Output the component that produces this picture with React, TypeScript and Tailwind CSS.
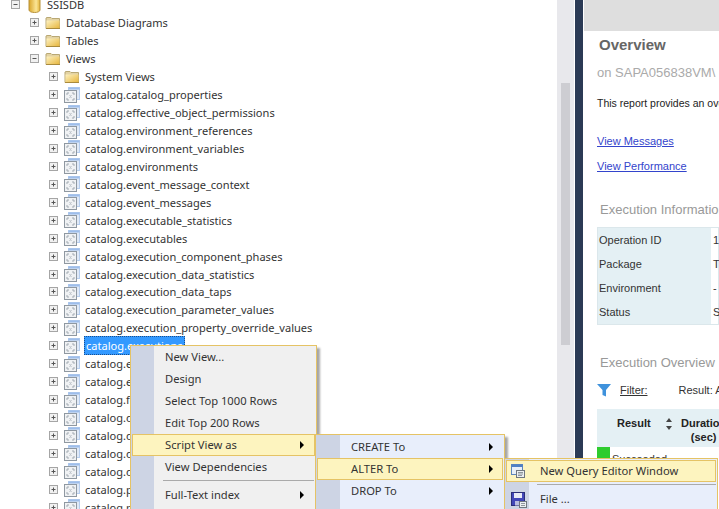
const views = [
  "catalog.catalog_properties",
  "catalog.effective_object_permissions",
  "catalog.environment_references",
  "catalog.environment_variables",
  "catalog.environments",
  "catalog.event_message_context",
  "catalog.event_messages",
  "catalog.executable_statistics",
  "catalog.executables",
  "catalog.execution_component_phases",
  "catalog.execution_data_statistics",
  "catalog.execution_data_taps",
  "catalog.execution_parameter_values",
  "catalog.execution_property_override_values",
  "catalog.executions",
  "catalog.extended_operation_info",
  "catalog.event_messages",
  "catalog.folders",
  "catalog.object_parameters",
  "catalog.object_versions",
  "catalog.operation_messages",
  "catalog.operations",
  "catalog.packages",
  "catalog.projects",
];

function Expander({ open }: { open?: boolean }) {
  return (
    <svg width="11" height="11" viewBox="0 0 11 11" className="shrink-0">
      <rect x="1.500" y="1.500" width="8" height="8" fill="#f1f1f1" stroke="#a5a5a5" />
      <path d="M3.500 5.500h4" stroke="#555" />
      {!open && <path d="M5.500 3.500v4" stroke="#555" />}
    </svg>
  );
}

function FolderIcon() {
  return (
    <svg width="16" height="14" viewBox="0 0 16 14" className="shrink-0">
      <defs>
        <linearGradient id="folderFill" x1="0" y1="0" x2="1" y2="1">
          <stop offset="0" stopColor="#fdf1c0" />
          <stop offset="1" stopColor="#e6b53c" />
        </linearGradient>
      </defs>
      <path d="M1 3V2L2 1.500h4l1 1h7.500V12.500H1z" fill="#e3d3a4" stroke="#b9a874" />
      <path d="M1.500 4.500h13v8h-13z" fill="url(#folderFill)" />
      <path d="M1 12.500h14" stroke="#a98a3c" />
    </svg>
  );
}

function ViewIcon() {
  return (
    <svg width="16" height="16" viewBox="0 0 16 16" className="shrink-0">
      <rect x="4.500" y="0.500" width="11" height="12" fill="#dfe9f7" stroke="#b5cdee" />
      <rect x="4.500" y="0.500" width="11" height="2" fill="#9dbdea" />
      <rect x="0.500" y="3.500" width="12" height="12" fill="#f0f2f4" stroke="#8f98a1" />
      <path d="M3 6h2M8 6h2M3 13h2M8 13h2M3 6v2M10 6v2M3 11v2M10 11v2" stroke="#a2aab2" />
      <path d="M5.500 8l2 3M7.500 8l-2 3" stroke="#c0c6cc" />
    </svg>
  );
}

function DbIcon() {
  return (
    <svg width="13" height="16" viewBox="0 0 13 16" className="shrink-0">
      <defs>
        <linearGradient id="dbFill" x1="0" y1="0" x2="1" y2="0">
          <stop offset="0" stopColor="#d9a52a" />
          <stop offset="0.65" stopColor="#fbe596" />
          <stop offset="1" stopColor="#e3b438" />
        </linearGradient>
      </defs>
      <path d="M1 0v13c0 1.500 2.500 2.500 5.500 2.500S12 14.500 12 13V0z" fill="url(#dbFill)" stroke="#b8923a" />
    </svg>
  );
}

function Row({ indent, open, icon, label, selected }: {
  indent: string;
  open?: boolean;
  icon: React.ReactNode;
  label: string;
  selected?: boolean;
}) {
  return (
    <div className={`flex h-[17.95px] items-center ${indent}`}>
      <Expander open={open} />
      <span className="ml-[5px] flex w-[16px] justify-center">{icon}</span>
      <span
        className={`ml-[4px] whitespace-nowrap px-[1px] leading-[17px] ${
          selected ? "border border-dotted border-[#1a4f8f] bg-[#3399ff] text-white" : "text-[#333]"
        }`}
      >
        {label}
      </span>
    </div>
  );
}

function Arrow() {
  return <span className="h-0 w-0 border-y-[4px] border-l-[4px] border-y-transparent border-l-black" />;
}

function MenuItem({ label, arrow, active, left, right, icon }: {
  label: string;
  arrow?: boolean;
  active?: boolean;
  left: string;
  right: string;
  icon?: React.ReactNode;
}) {
  return (
    <div
      className={`relative flex h-[22px] items-center whitespace-nowrap border ${
        active ? "border-[#e5c365] bg-[#fdf4bf]" : "border-transparent"
      } ${left}`}
    >
      {icon && <span className="absolute left-[3px] top-[2px]">{icon}</span>}
      <span className="flex-1 text-[11.2px] text-[#333]">{label}</span>
      {arrow && <span className={`flex ${right}`}><Arrow /></span>}
    </div>
  );
}

function QueryIcon() {
  return (
    <svg width="16" height="16" viewBox="0 0 16 16">
      <rect x="1.500" y="1.500" width="11" height="10" fill="#e8eff9" stroke="#5d86bd" />
      <rect x="1.500" y="1.500" width="11" height="2.500" fill="#4f7fc4" />
      <rect x="6.500" y="7.500" width="8" height="7" fill="#eceff2" stroke="#70777f" />
      <path d="M8 9.500h5M8 11h5M8 12.500h4" stroke="#8f969d" />
    </svg>
  );
}

function SaveIcon() {
  return (
    <svg width="18" height="18" viewBox="0 0 18 18">
      <rect x="1.500" y="1.500" width="13" height="13" fill="#4347b8" stroke="#2a2d78" />
      <rect x="4" y="2" width="8" height="5" fill="#e8eaf6" />
      <rect x="5" y="10" width="5" height="4.500" fill="#b9bde0" />
      <rect x="9.500" y="10.500" width="7" height="6" fill="#eceff2" stroke="#70777f" />
      <path d="M11 12.500h4M11 14.500h4" stroke="#8f969d" />
    </svg>
  );
}

export default function App() {
  return (
    <div className="relative flex h-screen w-screen overflow-hidden bg-white font-['Noto_Sans',sans-serif] text-[11.05px]">
      {/* object explorer */}
      <div className="-mt-[4px] w-[557px] shrink-0">
        <Row indent="pl-[10px]" open icon={<DbIcon />} label="SSISDB" />
        <Row indent="pl-[29px]" icon={<FolderIcon />} label="Database Diagrams" />
        <Row indent="pl-[29px]" icon={<FolderIcon />} label="Tables" />
        <Row indent="pl-[29px]" open icon={<FolderIcon />} label="Views" />
        <Row indent="pl-[48px]" icon={<FolderIcon />} label="System Views" />
        {views.map((v, i) => (
          <Row key={i} indent="pl-[48px]" icon={<ViewIcon />} label={v} selected={v === "catalog.executions"} />
        ))}
      </div>

      {/* scrollbar */}
      <div className="w-[17px] shrink-0 bg-[#e8e8ec] px-[4px] pt-[83px]">
        <div className="h-[262px] bg-[#cdcdd2]" />
      </div>
      <div className="ml-[1px] w-[8px] shrink-0 bg-[#2b3a55]" />

      {/* report pane */}
      <div className="min-w-0 flex-1 overflow-hidden whitespace-nowrap font-['Liberation_Sans',sans-serif]">
        <div className="ml-[1px] h-[31px] bg-[#dedede]" />
        <div className="pl-[14px]">
          <div className="ml-[2px] mt-[5px] text-[15px] font-bold leading-[18px] text-[#666]">Overview</div>
          <div className="mt-[11px] text-[13px] leading-[15px] text-[#aaa]">on SAPA056838VM\</div>
          <div className="mt-[16px] text-[10.500px] leading-[14px] text-[#222]">This report provides an overview</div>
          <div className="mt-[24px] text-[11px] leading-[14px] text-[#3344cc] underline">View Messages</div>
          <div className="mt-[11px] text-[11px] leading-[14px] text-[#3344cc] underline">View Performance</div>

          <div className="ml-[3px] mt-[29px] text-[13px] leading-[16px] text-[#999]">Execution Information</div>
          <div className="mt-[9px] grid grid-cols-[113px_1fr] border border-[#dbe7eb] text-[11px] leading-[24px] text-[#333]">
            {[
              ["Operation ID", "1"],
              ["Package", "T"],
              ["Environment", "-"],
              ["Status", "S"],
            ].map(([k, v]) => (
              <div key={k} className="contents">
                <div className="h-[24px] bg-[#e4f0f4] pl-[1px]">{k}</div>
                <div className="h-[24px] pl-[2px]">{v}</div>
              </div>
            ))}
          </div>

          <div className="ml-[3px] mt-[30px] text-[13px] leading-[16px] text-[#999]">Execution Overview</div>
          <div className="mt-[11px] flex h-[16px] items-center text-[11px] text-[#333]">
            <svg width="14" height="14" viewBox="0 0 14 14" className="shrink-0">
              <path d="M0 1h14L9 7v6.500L5.500 12V7z" fill="#3f92dc" />
            </svg>
            <span className="ml-[9px] underline">Filter:</span>
            <span className="ml-[31px]">Result: All</span>
          </div>
          <div className="mt-[11px] flex h-[38px] bg-[#e4f0f4] text-[11px] font-bold leading-[14px] text-[#222]">
            <div className="ml-[20px] mt-[7px] w-[48px] shrink-0">Result</div>
            <svg width="8" height="14" viewBox="0 0 8 14" className="mt-[8px] shrink-0">
              <path d="M4 1l3 4H1zM4 13l3-4H1z" fill="#444" />
            </svg>
            <div className="ml-[8px] mt-[7px] shrink-0 text-center">
              Duration
              <br />
              (sec)
            </div>
          </div>
          <div className="flex h-[20px] items-start text-[11px] text-[#333]">
            <span className="h-[12px] w-[13px] bg-[#2ecc2e]" />
            <span className="ml-[2px] mt-[4px]">Succeeded</span>
          </div>
        </div>
      </div>

      {/* context menus */}
      <div className="absolute left-[130px] top-[345px] h-[170px] w-[187px] border border-[#e5c365] bg-[#f0f0f0] shadow-[3px_3px_2px_rgba(0,0,0,0.35)]">
        <div className="absolute inset-y-0 left-0 w-[23px] bg-[#cdd4e4]" />
        <div className="relative px-[1px]">
          <MenuItem left="pl-[32px]" right="mr-[10px]" label="New View..." />
          <MenuItem left="pl-[32px]" right="mr-[10px]" label="Design" />
          <MenuItem left="pl-[32px]" right="mr-[10px]" label="Select Top 1000 Rows" />
          <MenuItem left="pl-[32px]" right="mr-[10px]" label="Edit Top 200 Rows" />
          <MenuItem left="pl-[32px]" right="mr-[10px]" label="Script View as" arrow active />
          <MenuItem left="pl-[32px]" right="mr-[10px]" label="View Dependencies" />
          <div className="my-[2px] ml-[31px] mr-[1px] h-[2px] border-t border-[#aaa]" />
          <MenuItem left="pl-[32px]" right="mr-[10px]" label="Full-Text index" arrow />
        </div>
      </div>

      <div className="absolute left-[315px] top-[434px] h-[90px] w-[190px] border border-[#e5c365] bg-[#e8eefb] shadow-[3px_3px_2px_rgba(0,0,0,0.35)]">
        <div className="absolute inset-y-0 left-0 w-[24px] bg-[#cdd4e4]" />
        <div className="relative px-[1px] pt-[1px]">
          <MenuItem left="pl-[33px]" right="mr-[9px]" label="CREATE To" arrow />
          <MenuItem left="pl-[33px]" right="mr-[9px]" label="ALTER To" arrow active />
          <MenuItem left="pl-[33px]" right="mr-[9px]" label="DROP To" arrow />
        </div>
      </div>

      <div className="absolute left-[504px] top-[458px] h-[70px] w-[214px] border border-[#e5c365] bg-[#e8eefb]">
        <div className="absolute inset-y-0 left-0 w-[24px] bg-[#cdd4e4]" />
        <div className="relative px-[1px] pt-[1px]">
          <MenuItem left="pl-[33px]" right="" label="New Query Editor Window" active icon={<QueryIcon />} />
          <div className="my-[2px] ml-[31px] h-[2px] border-t border-[#aaa]" />
          <MenuItem left="pl-[33px]" right="" label="File ..." icon={<SaveIcon />} />
        </div>
      </div>
    </div>
  );
}
